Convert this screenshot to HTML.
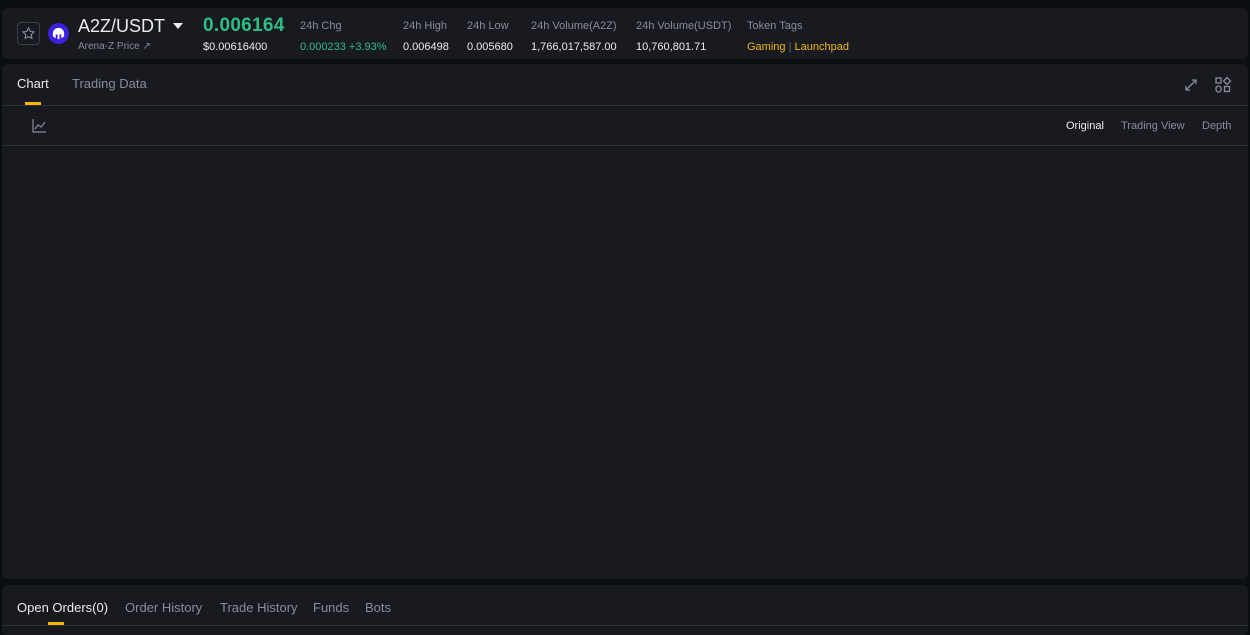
<!DOCTYPE html>
<html><head><style>
*{margin:0;padding:0;box-sizing:border-box}
body{width:1250px;height:630px;background:#0b0e11;font-family:"Liberation Sans",sans-serif;position:relative;overflow:hidden;color:#eaecef}
.p{position:absolute;background:#181a20;border-radius:6px}
.a{position:absolute;white-space:nowrap}
.g{color:#848e9c;font-size:11px}
.w{color:#eaecef;font-size:11px}
</style></head><body>
<div class="p" style="left:2px;top:8px;width:1246px;height:51px"></div>
<div class="a" style="left:17px;top:22px;width:23px;height:23px;border:1px solid #3a3f47;border-radius:4px"></div>
<svg class="a" style="left:21px;top:26px" width="15" height="15" viewBox="0 0 24 24"><path d="M12 3l2.7 5.6 6.1.8-4.4 4.3 1 6.1L12 17l-5.4 2.8 1-6.1-4.4-4.3 6.1-.8z" fill="none" stroke="#848e9c" stroke-width="1.8"/></svg>
<div class="a" style="left:48px;top:23px;width:21px;height:21px;border-radius:50%;background:#3b20e0"></div>
<svg class="a" style="left:51px;top:26px" width="15" height="15" viewBox="0 0 16 16"><path d="M2 8a6 6 0 0 1 12 0v3l-3 2V9H9v5H7V9H5v4l-3-2z" fill="#fff"/></svg>
<div class="a" style="left:78px;top:16px;font-size:18px;color:#eaecef">A2Z/USDT</div>
<div class="a" style="left:173px;top:23px;width:0;height:0;border-left:5px solid transparent;border-right:5px solid transparent;border-top:6px solid #eaecef"></div>
<div class="a g" style="left:78px;top:41px;font-size:10px">Arena-Z Price ↗</div>
<div class="a" style="left:203px;top:15px;font-size:19px;font-weight:bold;color:#2ebd85;letter-spacing:0.3px">0.006164</div>
<div class="a w" style="left:203px;top:41px">$0.00616400</div>
<div class="a g" style="left:300px;top:20px">24h Chg</div>
<div class="a" style="left:300px;top:41px;font-size:11px;color:#2ebd85">0.000233 +3.93%</div>
<div class="a g" style="left:403px;top:20px">24h High</div><div class="a w" style="left:403px;top:41px">0.006498</div>
<div class="a g" style="left:467px;top:20px">24h Low</div><div class="a w" style="left:467px;top:41px">0.005680</div>
<div class="a g" style="left:531px;top:20px">24h Volume(A2Z)</div><div class="a w" style="left:531px;top:41px">1,766,017,587.00</div>
<div class="a g" style="left:636px;top:20px">24h Volume(USDT)</div><div class="a w" style="left:636px;top:41px">10,760,801.71</div>
<div class="a g" style="left:747px;top:20px">Token Tags</div>
<div class="a" style="left:747px;top:41px;font-size:11px;color:#f0b90b">Gaming <span style="color:#5e6673">|</span> Launchpad</div>

<div class="p" style="left:2px;top:64px;width:1246px;height:515px"></div>
<div class="a" style="left:17px;top:76px;font-size:13px;color:#eaecef">Chart</div>
<div class="a" style="left:72px;top:76px;font-size:13px;color:#848e9c">Trading Data</div>
<div class="a" style="left:25px;top:102px;width:16px;height:3px;background:#f0b90b"></div>
<div class="a" style="left:2px;top:105px;width:1246px;height:1px;background:#2b3139"></div>
<svg class="a" style="left:32px;top:118px" width="15" height="15" viewBox="0 0 15 15"><path d="M1 1v13h13M3 11l3-4 3 2 4-5" fill="none" stroke="#848e9c" stroke-width="1.2"/></svg>
<div class="a" style="left:1066px;top:120px;font-size:11px;color:#eaecef">Original</div>
<div class="a g" style="left:1121px;top:120px">Trading View</div>
<div class="a g" style="left:1202px;top:120px">Depth</div>
<div class="a" style="left:2px;top:145px;width:1246px;height:1px;background:#2b3139"></div>
<svg class="a" style="left:1183px;top:77px" width="16" height="16" viewBox="0 0 16 16"><path d="M3 13L13 3M9 3h4v4M3 9v4h4" fill="none" stroke="#848e9c" stroke-width="1.3"/></svg>
<svg class="a" style="left:1214px;top:76px" width="18" height="18" viewBox="0 0 18 18"><g fill="none" stroke="#848e9c" stroke-width="1.3"><rect x="2" y="2" width="5" height="5"/><path d="M13 1.5l3.5 3.5-3.5 3.5-3.5-3.5z"/><rect x="2" y="10" width="5" height="6" rx="2.5"/><rect x="10.5" y="10.5" width="5" height="5"/></g></svg>

<div class="p" style="left:2px;top:585px;width:1246px;height:50px"></div>
<div class="a" style="left:17px;top:600px;font-size:13px;color:#eaecef">Open Orders(0)</div>
<div class="a" style="left:125px;top:600px;font-size:13px;color:#848e9c">Order History</div>
<div class="a" style="left:220px;top:600px;font-size:13px;color:#848e9c">Trade History</div>
<div class="a" style="left:313px;top:600px;font-size:13px;color:#848e9c">Funds</div>
<div class="a" style="left:365px;top:600px;font-size:13px;color:#848e9c">Bots</div>
<div class="a" style="left:48px;top:622px;width:16px;height:3px;background:#f0b90b"></div>
<div class="a" style="left:2px;top:625px;width:1246px;height:1px;background:#2b3139"></div>
</body></html>
